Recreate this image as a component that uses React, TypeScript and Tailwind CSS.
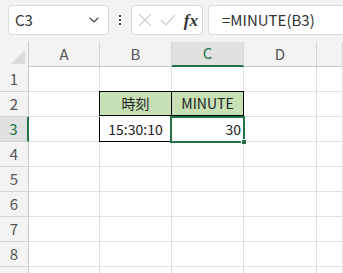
import { ChevronDown } from "lucide-react";

const cols = ["A", "B", "C", "D", ""];
const rows = [1, 2, 3, 4, 5, 6, 7, 8, 9];

const App = () => {
  return (
    <div
      className="w-[343px] h-[273px] overflow-hidden bg-[#f3f3f3] text-[#222]"
      style={{ fontFamily: '"Noto Sans CJK JP", "Noto Sans", sans-serif' }}
    >
      {/* Formula bar */}
      <div className="flex items-center h-[42px] pl-[8px] pb-[2px]">
        <div className="flex items-center justify-between w-[101px] h-[30px] bg-white border border-[#d9d9d9] rounded-[4px] pl-[6px] pr-[6px]">
          <span className="text-[15px] text-[#333]">C3</span>
          <ChevronDown className="w-[16px] h-[16px] text-[#444]" strokeWidth={1.6} />
        </div>
        <div className="w-[22px] flex flex-col items-center gap-[2px]">
          <span className="w-[2px] h-[2px] bg-[#444]" />
          <span className="w-[2px] h-[2px] bg-[#444]" />
          <span className="w-[2px] h-[2px] bg-[#444]" />
        </div>
        <div className="flex items-center w-[72px] h-[30px] bg-white border border-[#d9d9d9] rounded-[4px] pl-[6px] pr-[4px] gap-[8px]">
          <svg width="14" height="14" viewBox="0 0 14 14" className="text-[#c8c8c8]">
            <path d="M1 1L13 13M13 1L1 13" stroke="currentColor" strokeWidth="1.1" fill="none" />
          </svg>
          <svg width="16" height="12" viewBox="0 0 16 12" className="text-[#c8c8c8]">
            <path d="M1 6L6 11L15 1" stroke="currentColor" strokeWidth="1.1" fill="none" />
          </svg>
          <span
            className="italic text-[17px] text-[#333] font-bold leading-none"
            style={{ fontFamily: '"Liberation Serif", "DejaVu Serif", serif' }}
          >
            fx
          </span>
        </div>
        <div className="flex items-center flex-1 h-[30px] ml-[5px] bg-white border border-r-0 border-[#d9d9d9] rounded-l-[4px] pl-[13px]">
          <span className="text-[15px] text-[#333]">=MINUTE(B3)</span>
        </div>
      </div>

      {/* Grid */}
      <div className="grid grid-cols-[29px_71px_72px_72px_73px_1fr]">
        {/* Corner */}
        <div className="h-[25px] bg-[#f3f3f3] border-r border-[#c8c8c8] flex items-end justify-end p-[3px]">
          <svg width="14" height="14" viewBox="0 0 14 14">
            <path d="M14 0L14 14L0 14Z" fill="#dcdcdc" />
          </svg>
        </div>
        {cols.map((c) => (
          <div
            key={c || "e"}
            className={
              c === "C"
                ? "h-[25px] bg-[#e1e1e1] border-r border-[#d4d4d4] border-b-2 border-b-[#217346] flex items-center justify-center text-[15px] text-[#217346]"
                : "h-[25px] bg-[#f3f3f3] border-r border-[#d4d4d4] border-b border-b-[#c8c8c8] flex items-center justify-center text-[15px] text-[#555]"
            }
          >
            {c}
          </div>
        ))}

        {rows.map((r) => (
          <div key={r} className="contents">
            <div
              className={
                r === 3
                  ? "h-[25px] bg-[#e1e1e1] border-r-2 border-[#217346] border-b border-b-[#d4d4d4] flex items-center justify-center text-[15px] text-[#217346]"
                  : "h-[25px] bg-[#f3f3f3] border-r border-[#c8c8c8] border-b border-b-[#d4d4d4] flex items-center justify-center text-[15px] text-[#555]"
              }
            >
              {r < 9 ? r : ""}
            </div>
            {cols.map((c) => {
              const key = `${c}${r}`;
              if (key === "B2")
                return (
                  <div key={key} className="h-[25px] bg-[#c6e0b4] border border-black -mt-px -ml-px flex items-center justify-center text-[14px] text-[#222]">
                    時刻
                  </div>
                );
              if (key === "C2")
                return (
                  <div key={key} className="h-[25px] bg-[#c6e0b4] border border-l-0 border-black -mt-px flex items-center justify-center text-[14px] text-[#222]">
                    MINUTE
                  </div>
                );
              if (key === "B3")
                return (
                  <div key={key} className="h-[25px] bg-white border border-t-0 border-black -ml-px flex items-center justify-center text-[14px] text-[#222]">
                    15:30:10
                  </div>
                );
              if (key === "C3")
                return (
                  <div key={key} className="relative h-[25px] bg-white">
                    <div className="absolute -left-[2px] -top-[1px] -right-[1px] -bottom-[1px] border-2 border-[#217346] flex items-center justify-end pr-[2px] text-[14px] text-[#222]">
                      30
                    </div>
                    <div className="absolute -right-[3px] -bottom-[3px] w-[6px] h-[6px] bg-[#217346] border border-white" />
                  </div>
                );
              return (
                <div key={key} className="h-[25px] bg-white border-r border-b border-[#e1e1e1]" />
              );
            })}
          </div>
        ))}
      </div>
    </div>
  );
};

export default App;
